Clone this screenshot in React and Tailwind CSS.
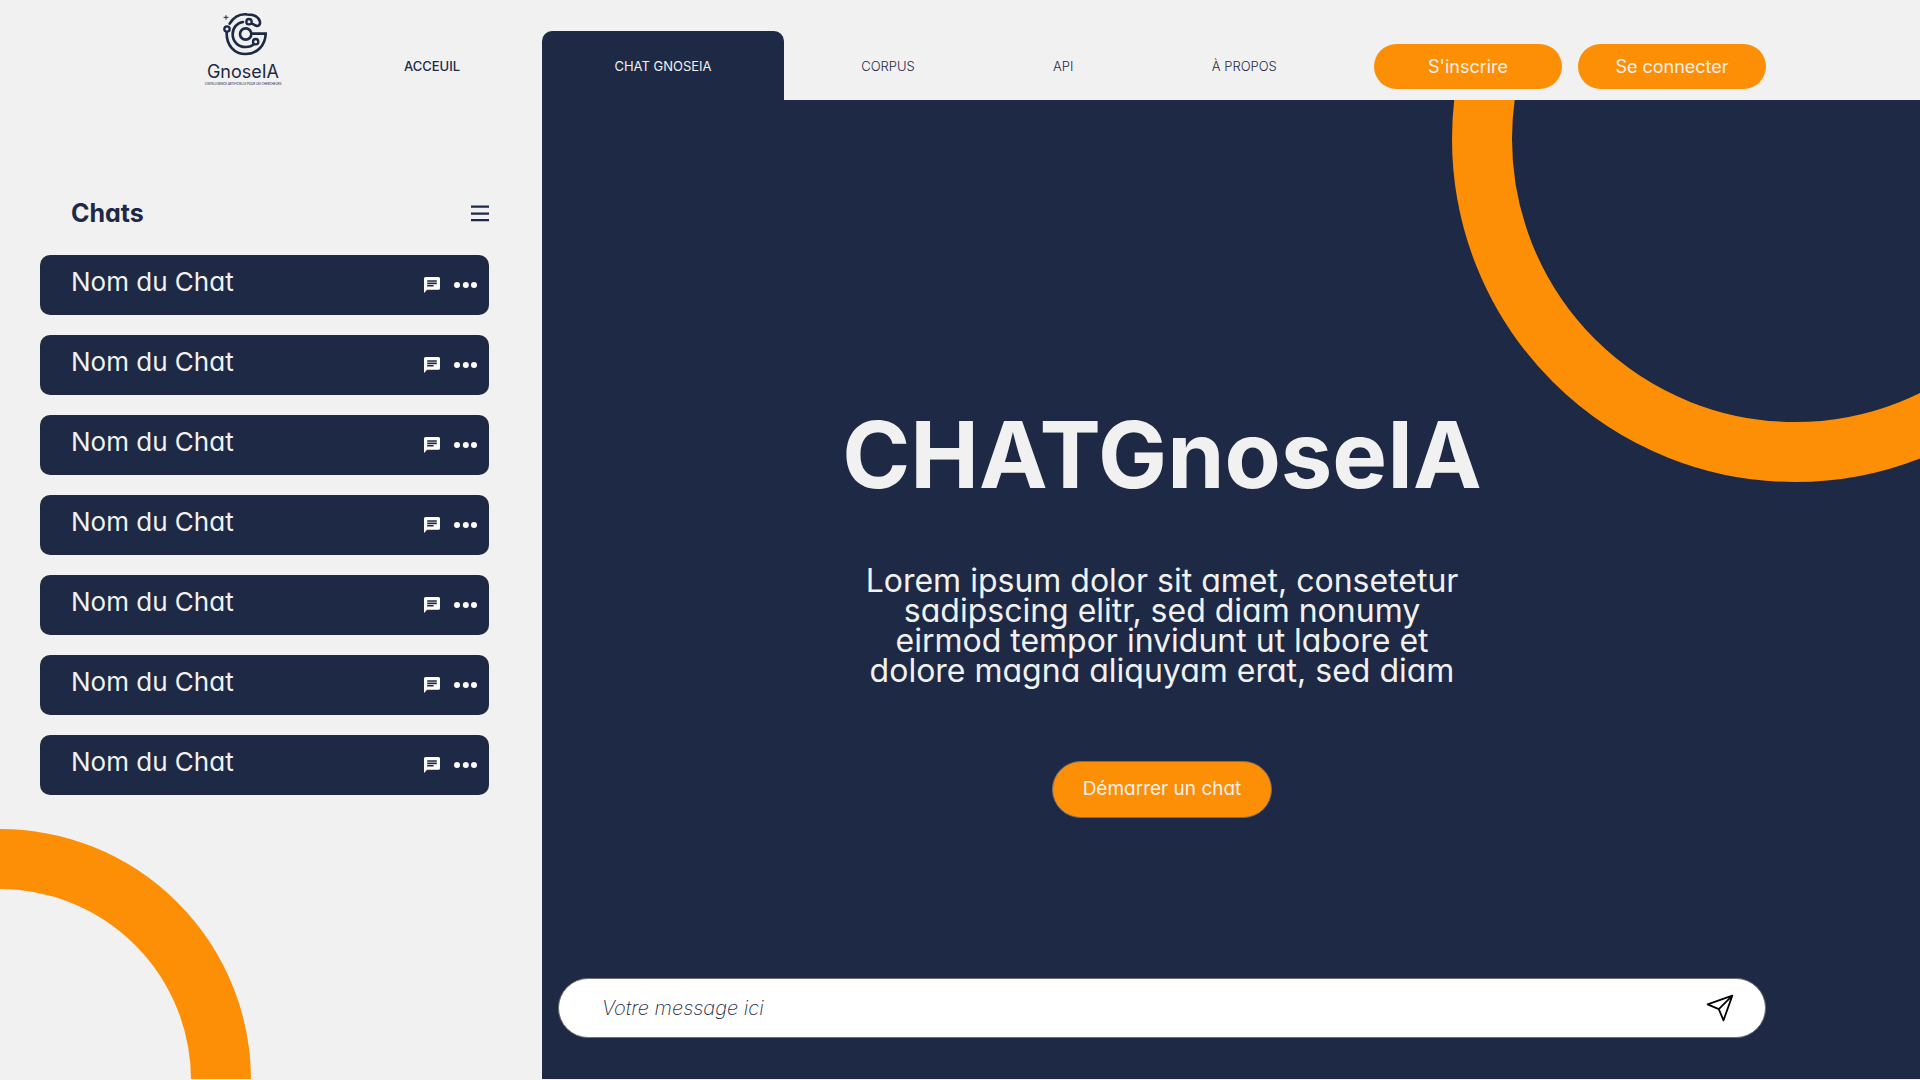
import React from "react";

const chats = Array.from({ length: 7 }, (_, i) => ({ id: i, name: "Nom du Chat" }));

function LogoMark() {
  return (
    <svg viewBox="95 33 141 138" className="ml-1 h-[46px] w-[47px]" fill="none" stroke="#1e2945" strokeWidth="8" strokeLinecap="round" aria-hidden="true">
      <path d="M118 71C130 51 150 41 170 43C188 43 203 50 208 62C211 72 207 79 199 78L185 71" />
      <circle cx="176" cy="65" r="8" strokeWidth="7" />
      <circle cx="110" cy="87" r="8" strokeWidth="7" />
      <path d="M109 97C108 136 132 162 166 162C200 162 225 136 226 101H187" />
      <circle cx="166" cy="102" r="17" />
      <path d="M158 66C139 69 127 84 127 103C127 125 144 141 166 141C177 141 185 138 190 133" />
      <circle cx="196" cy="125" r="8" strokeWidth="7" />
      <path d="M107 47V58M101 52H113" strokeWidth="3" />
    </svg>
  );
}

function MenuIcon() {
  return (
    <svg viewBox="0 0 18 17" className="h-[17px] w-[18px]" fill="#1e2945" aria-hidden="true">
      <path d="M0 0.5h18v2.3H0zM0 7.4h18v2.3H0zM0 14h18v2.3H0z" />
    </svg>
  );
}

function ChatIcon() {
  return (
    <svg viewBox="2 2 20 20" className="size-4" fill="#fff" aria-hidden="true">
      <path d="M20 2H4c-1.1 0-1.99.9-1.99 2L2 22l4-4h14c1.1 0 2-.9 2-2V4c0-1.1-.9-2-2-2zM6 9h12v2H6V9zm8 5H6v-2h8v2zm4-6H6V6h12v2z" />
    </svg>
  );
}

function DotsIcon() {
  return (
    <svg viewBox="0 0 24 6" className="h-[6px] w-[24px]" fill="#fff" aria-hidden="true">
      <circle cx="4" cy="3" r="3" />
      <circle cx="12.8" cy="3" r="3" />
      <circle cx="21" cy="3" r="3" />
    </svg>
  );
}

function SendIcon() {
  return (
    <svg viewBox="0 0 28 28" className="size-7" fill="none" stroke="#000" strokeWidth="1.8" strokeLinejoin="round" aria-hidden="true">
      <path d="M26.3 1.7L1.6 10.3L12.8 15.1L17.5 26.3ZM26.3 1.7L12.8 15.1" />
    </svg>
  );
}

function Header() {
  return (
    <header className="flex h-[100px] shrink-0 bg-[#f1f1f1]">
      <div className="flex w-[542px] shrink-0">
        <a href="#accueil" className="ml-[199px] flex w-[88px] flex-col items-center pt-[11px]">
          <LogoMark />
          <span className="mt-[5px] text-[18px] leading-[20px]">GnoseIA</span>
          <span className="whitespace-nowrap font-['Lato',sans-serif] text-[3px] leading-[4px]">L'INTELLIGENCE ARTIFICIELLE POUR LES CHERCHEURS</span>
        </a>
        <a href="#accueil" className="ml-[85px] w-[120px] pt-[49px] text-center text-[13px] font-medium leading-[34px]">
          ACCEUIL
        </a>
      </div>
      <nav className="flex min-w-0 flex-1 text-[13px] text-[#1e2945]">
        <a href="#chat" className="mt-[31px] flex w-[242px] shrink-0 justify-center rounded-t-[10px] bg-[#1e2945] pt-[18px] leading-[34px] text-[#f1f1f1]">
          CHAT GNOSEIA
        </a>
        <div className="flex flex-1 justify-around pl-2 pr-7 pt-[49px] font-light leading-[34px]">
          <a href="#corpus">CORPUS</a>
          <a href="#api">API</a>
          <a href="#apropos">À PROPOS</a>
        </div>
      </nav>
      <div className="mr-[154px] flex shrink-0 gap-4 pt-11 text-[18px] text-[#f1f1f1]">
        <button type="button" className="h-[45px] w-[188px] rounded-full bg-[#fd8f06]">S'inscrire</button>
        <button type="button" className="h-[45px] w-[188px] rounded-full bg-[#fd8f06]">Se connecter</button>
      </div>
    </header>
  );
}

function Sidebar() {
  return (
    <aside className="relative w-[542px] shrink-0 overflow-hidden bg-[#f1f1f1] pl-10 pr-[53px] pt-[95px]">
      <div className="flex h-9 items-center justify-between pl-[31px]">
        <h2 className="text-[25px] font-bold leading-9">Chats</h2>
        <button type="button" aria-label="Menu"><MenuIcon /></button>
      </div>
      <ul className="mt-6 flex flex-col gap-5">
        {chats.map((chat) => (
          <li key={chat.id} className="flex h-[60px] items-center rounded-[10px] bg-[#1e2945] pl-[31px] pr-3 text-[#f1f1f1]">
            <span className="flex-1 pb-1.5 text-[26px] leading-9">{chat.name}</span>
            <button type="button" aria-label="Ouvrir le chat"><ChatIcon /></button>
            <button type="button" aria-label="Options" className="ml-[13px]"><DotsIcon /></button>
          </li>
        ))}
      </ul>
      <div className="absolute -bottom-[252px] -left-[251px] size-[502px] rounded-full border-[60px] border-[#fd8f06]" />
    </aside>
  );
}

function ChatPanel() {
  return (
    <main className="relative flex min-w-0 flex-1 flex-col overflow-hidden bg-[#1e2945] pl-4 pr-[154px] text-[#f1f1f1]">
      <div className="absolute -right-[218px] -top-[304px] size-[686px] rounded-full border-[60px] border-[#fd8f06]" />
      <div className="relative flex flex-1 flex-col items-center pt-[300px] text-center">
        <h1 className="text-[92px] font-bold leading-[110px]">CHATGnoseIA</h1>
        <p className="mt-14 text-[32px] leading-[30px]">
          Lorem ipsum dolor sit amet, consetetur<br />
          sadipscing elitr, sed diam nonumy<br />
          eirmod tempor invidunt ut labore et<br />
          dolore magna aliquyam erat, sed diam
        </p>
        <button type="button" className="mt-[75px] h-[57px] w-[220px] rounded-full border border-[#707070] bg-[#fd8f06] text-[19px]">
          Démarrer un chat
        </button>
      </div>
      <form className="relative mb-[41px] flex h-[60px] items-center rounded-full border border-[#707070] bg-white pl-[43px] pr-[31px]" onSubmit={(e) => e.preventDefault()}>
        <input
          type="text"
          aria-label="Votre message"
          placeholder="Votre message ici"
          className="min-w-0 flex-1 bg-transparent text-[20px] font-extralight italic text-[#1e2945] outline-none placeholder:text-[#1e2945]"
        />
        <button type="submit" aria-label="Envoyer"><SendIcon /></button>
      </form>
    </main>
  );
}

export default function App() {
  return (
    <div className="flex min-h-screen flex-col bg-[#f1f1f1] pb-px font-['Inter','Open_Sans',sans-serif] text-[#1e2945] [font-feature-settings:'cv11']">
      <Header />
      <div className="flex flex-1">
        <Sidebar />
        <ChatPanel />
      </div>
    </div>
  );
}
